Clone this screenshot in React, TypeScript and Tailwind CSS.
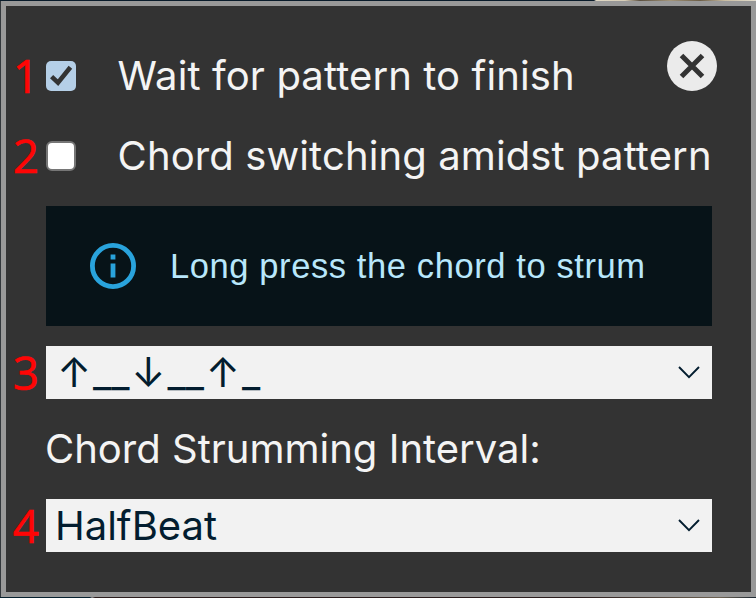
import { useState, type ReactNode } from "react";

function Marker({ children }: { children: ReactNode }) {
  return (
    <span className="-mt-[2px] flex w-[39.6px] shrink-0 items-center justify-center pr-[1px] pl-[1px] font-['Open_Sans','Noto_Sans',sans-serif] text-[46px] leading-none font-medium text-[#ff0505] [-webkit-text-stroke:0.6px_#ff0505]">
      {children}
    </span>
  );
}

function CheckBox({ checked, onToggle, label }: { checked: boolean; onToggle: () => void; label: string }) {
  return (
    <button
      role="checkbox"
      aria-checked={checked}
      aria-label={label}
      onClick={onToggle}
      className={
        checked
          ? "flex size-[30px] shrink-0 items-center justify-center rounded-[5px] bg-[#b5cfe7]"
          : "size-[30px] shrink-0 rounded-[6px] border-2 border-[#767676] bg-white"
      }
    >
      {checked && (
        <svg viewBox="0 0 30 30" className="size-[30px]" fill="none" stroke="#333333" strokeWidth="4.6">
          <path d="M5.6 15.6 L12 21.6 L24.4 6.2" />
        </svg>
      )}
    </button>
  );
}

function SelectBox({ children }: { children: ReactNode }) {
  return (
    <div className="flex h-[53px] w-[666px] items-center justify-between bg-[#f2f2f2] pr-[11.6px] pl-[9.4px] text-[#031d2f]">
      {children}
      <svg viewBox="0 0 22 13" className="h-[13px] w-[22px]" fill="none" stroke="currentColor" strokeWidth="1.9">
        <path d="M1 1 L11 11.2 L21 1" />
      </svg>
    </div>
  );
}

function Arrow({ children }: { children: ReactNode }) {
  return <span className="inline-block w-[38px] text-center text-[41px]">{children}</span>;
}

export default function App() {
  const [wait, setWait] = useState(true);
  const [switching, setSwitching] = useState(false);
  return (
    <div className="flex h-[598px] w-[756px] flex-col overflow-hidden bg-[#33383c] font-['Inter',sans-serif] text-[40px] leading-[53px] whitespace-nowrap text-[#f4f4f4]">
      <div className="h-px shrink-0 bg-[linear-gradient(90deg,#0a1c2b_594px,#e0d8c4_596px,#d8ceb8_625px,#5b5040_640px,#a3957a_670px,#6b5d46_700px,#c9bda2_725px,#e3ddce)]" />
      <div className="ml-px h-[596px] shrink-0 border-[5px] border-[#999999] bg-[#333333] pt-[30px]">
        <div className="flex h-[80px] items-center">
          <Marker>1</Marker>
          <div className="flex w-[666px] items-center">
            <CheckBox checked={wait} onToggle={() => setWait(!wait)} label="Wait for pattern to finish" />
            <span className="-mt-[2px] ml-[42px] tracking-[0.11px]">Wait for pattern to finish</span>
            <button
              aria-label="Close"
              className="mt-[-20px] mr-[-5px] ml-auto flex size-[50px] items-center justify-center rounded-full bg-[#ebebeb]"
            >
              <svg viewBox="0 0 26 26" className="size-[26px]" fill="none" stroke="#333333" strokeWidth="5">
                <path d="M2.5 2.5 L23.5 23.5 M23.5 2.5 L2.5 23.5" />
              </svg>
            </button>
          </div>
        </div>
        <div className="flex h-[80px] items-center">
          <Marker>2</Marker>
          <CheckBox checked={switching} onToggle={() => setSwitching(!switching)} label="Chord switching amidst pattern" />
          <span className="-mt-[2px] ml-[42px] tracking-[0.11px]">Chord switching amidst pattern</span>
        </div>
        <div className="mt-[10px] ml-[39.6px] flex h-[120px] w-[666px] items-center bg-[#071318] pl-[44.4px] text-[#b8e7fb]">
          <svg viewBox="0 0 46 46" className="-mt-px size-[46px] shrink-0" fill="none" stroke="#29a3dc" strokeWidth="4.8">
            <circle cx="23" cy="23" r="20.6" />
            <path d="M23 11.5 V16.5 M23 20.5 V34.5" />
          </svg>
          <span className="ml-[34px] font-['Liberation_Sans',sans-serif] text-[34.5px] tracking-[0.6px]">
            Long press the chord to strum
          </span>
        </div>
        <div className="mt-[20px] flex items-center">
          <Marker>3</Marker>
          <SelectBox>
            <span>
              <Arrow>↑</Arrow>__<Arrow>↓</Arrow>__<Arrow>↑</Arrow>_
            </span>
          </SelectBox>
        </div>
        <div className="mt-[23px] mb-[24px] ml-[39px] h-[53px]">Chord Strumming Interval:</div>
        <div className="flex items-center">
          <Marker>4</Marker>
          <SelectBox>
            <span>HalfBeat</span>
          </SelectBox>
        </div>
      </div>
      <div className="h-px shrink-0 bg-[linear-gradient(90deg,#06202e_90px,#8d8d8d_92px,#2b1d1d_95px,#2a1c1c_580px,#6d6252_720px,#1b2732)]" />
    </div>
  );
}
